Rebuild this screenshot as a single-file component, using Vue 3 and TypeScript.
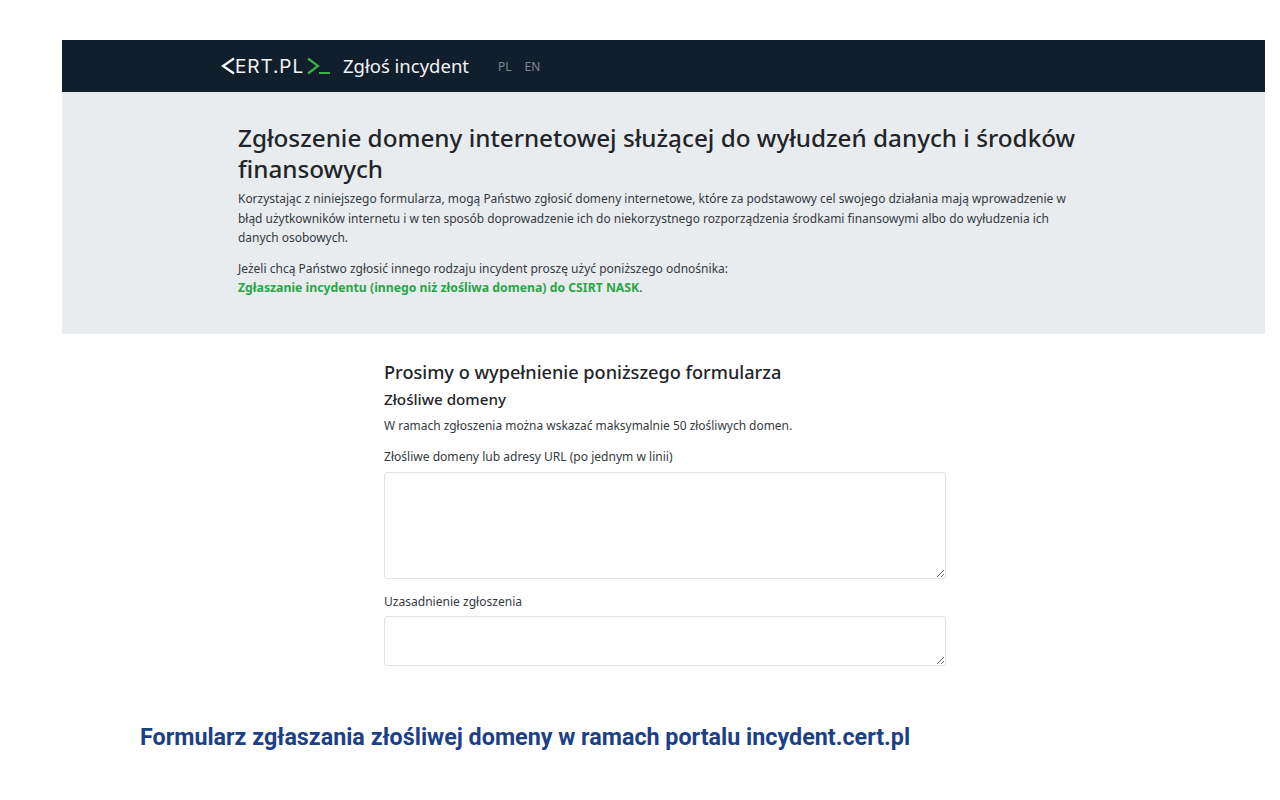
<script setup lang="ts">
const langs = ['PL', 'EN'];
</script>

<template>
  <div class="page">
    <div class="sheet">
      <nav class="navbar">
        <div class="logo">
          <svg class="chevron" width="15" height="18" viewBox="0 0 15 18">
            <path d="M14 1.500 3 9l11 7.500" fill="none" stroke="#fff" stroke-width="2.200" />
          </svg>
          <span class="logo-text">ERT.PL</span>
          <svg class="prompt" width="23" height="18" viewBox="0 0 23 18">
            <path d="M1 1.500 11 9 1 16.500" fill="none" stroke="#3fae49" stroke-width="2.200" />
            <path d="M12 16h11" fill="none" stroke="#3fae49" stroke-width="2" />
          </svg>
        </div>
        <span class="brand-title">Zgłoś incydent</span>
        <div class="langs">
          <span v-for="l in langs" :key="l" class="lang">{{ l }}</span>
        </div>
      </nav>

      <header class="jumbotron">
        <h1>Zgłoszenie domeny internetowej służącej do wyłudzeń danych i środków finansowych</h1>
        <p class="intro">
          Korzystając z niniejszego formularza, mogą Państwo zgłosić domeny internetowe, które za podstawowy cel swojego działania mają wprowadzenie w błąd użytkowników internetu i w ten sposób doprowadzenie ich do niekorzystnego rozporządzenia środkami finansowymi albo do wyłudzenia ich danych osobowych.
        </p>
        <p class="other">
          Jeżeli chcą Państwo zgłosić innego rodzaju incydent proszę użyć poniższego odnośnika:<br />
          <a href="#" class="green-link">Zgłaszanie incydentu (innego niż złośliwa domena) do CSIRT NASK</a>.
        </p>
      </header>

      <form class="report-form">
        <h2>Prosimy o wypełnienie poniższego formularza</h2>
        <h3>Złośliwe domeny</h3>
        <p class="hint">W ramach zgłoszenia można wskazać maksymalnie 50 złośliwych domen.</p>
        <label class="field-label" for="domains">Złośliwe domeny lub adresy URL (po jednym w linii)</label>
        <textarea id="domains" class="domains"></textarea>
        <label class="field-label second" for="reason">Uzasadnienie zgłoszenia</label>
        <textarea id="reason" class="reason"></textarea>
      </form>
    </div>

    <div class="caption">Formularz zgłaszania złośliwej domeny w ramach portalu incydent.cert.pl</div>
  </div>
</template>

<style>
html, body {
  margin: 0;
  background: #fff;
}
</style>

<style scoped>
.page {
  width: 1280px;
  height: 800px;
  overflow: hidden;
  padding-top: 40px;
  box-sizing: border-box;
  font-family: "Noto Sans", "Open Sans", sans-serif;
  color: #212529;
}

.sheet {
  margin-left: 62px;
  width: 1203px;
}

.navbar {
  height: 52px;
  background: #111e2b;
  display: flex;
  align-items: center;
  padding-left: 158px;
  box-sizing: border-box;
}

.logo {
  display: flex;
  align-items: center;
  width: 123px;
}

.logo-text {
  font-family: "Inter", sans-serif;
  font-size: 19px;
  letter-spacing: 0.9px;
  color: #f2f4f5;
  line-height: 1;
}

.prompt {
  margin-left: 3px;
}

.brand-title {
  font-family: "Noto Sans", sans-serif;
  font-size: 18.500px;
  color: #f2f4f5;
  width: 155px;
  margin-bottom: 2px;
}

.langs {
  display: flex;
  gap: 13px;
}

.lang {
  font-family: "Noto Sans", sans-serif;
  font-size: 12px;
  color: #7f8992;
}

.jumbotron {
  height: 242px;
  background: #e9ecef;
  padding: 30px 176px 0;
  box-sizing: border-box;
}

h1 {
  margin: 0 0 5px;
  width: 860px;
  font-size: 24.250px;
  font-weight: 500;
  line-height: 31px;
  color: #212529;
}

.intro,
.other {
  line-height: 19.500px;
  color: #343a40;
  width: 850px;
}

.intro {
  margin: 0 0 11px;
  font-size: 11.950px;
}

.other {
  margin: 0;
  font-size: 12.020px;
}

.green-link {
  color: #28a745;
  font-size: 12.250px;
  font-weight: 700;
  text-decoration: none;
}

.report-form {
  margin-left: 322px;
  width: 562px;
  padding-top: 25px;
}

h2 {
  margin: 0;
  font-size: 18.150px;
  font-weight: 500;
  line-height: 26px;
  color: #212529;
}

h3 {
  margin: 2px 0 0;
  font-size: 15.200px;
  font-weight: 500;
  line-height: 24px;
  color: #212529;
}

.hint {
  margin: 5px 0 0;
  font-size: 11.950px;
  line-height: 20px;
  color: #343a40;
}

.field-label {
  display: block;
  margin-top: 11px;
  font-size: 12.050px;
  line-height: 20px;
  color: #343a40;
}

.field-label.second {
  margin-top: 13px;
}

textarea {
  display: block;
  width: 100%;
  margin-top: 5px;
  box-sizing: border-box;
  border: 1px solid #e0e2e5;
  border-radius: 3px;
  background: #fff;
  outline: none;
}

.reason {
  height: 50px;
  margin-top: 4px;
}

.domains {
  height: 107px;
}

.caption {
  margin: 56px 0 0 140px;
  font-family: Roboto, sans-serif;
  font-size: 23.300px;
  font-weight: 700;
  line-height: 30px;
  color: #1c3f87;
}
</style>
